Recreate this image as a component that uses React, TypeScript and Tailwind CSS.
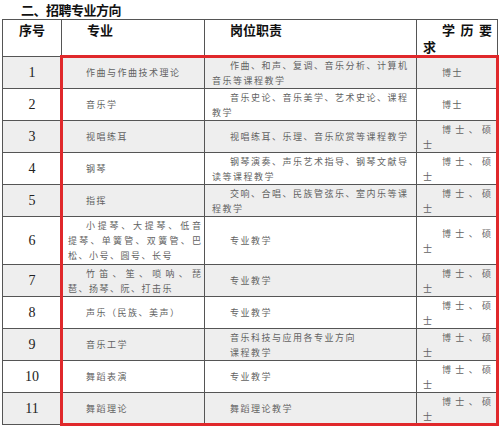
import React from "react";

type Line = { text: string; indent?: boolean; spread?: boolean };

const cjk = "font-['Noto_Sans_CJK_SC','Noto_Sans',sans-serif]";
const body = `${cjk} text-[9px] tracking-[1.5px] text-[#626262] leading-[15px]`;

function Spread({ text, className }: { text: string; className?: string }) {
  return (
    <div className={`flex justify-between ${className ?? ""}`}>
      {Array.from(text).map((c, i) => (
        <span key={i}>{c}</span>
      ))}
    </div>
  );
}

function Lines({ lines, indent }: { lines: Line[]; indent: string }) {
  return (
    <div className="flex flex-col w-full">
      {lines.map((l, i) =>
        l.spread ? (
          <Spread
            key={i}
            text={l.text}
            className={`${l.indent ? indent : ""} tracking-normal`}
          />
        ) : (
          <div key={i} className={`whitespace-nowrap ${l.indent ? indent : ""}`}>
            {l.text}
          </div>
        )
      )}
    </div>
  );
}

type Row = {
  n: number;
  major: Line[];
  duty: Line[];
  master: boolean;
  h: string;
};

const rows: Row[] = [
  {
    n: 1,
    major: [{ text: "作曲与作曲技术理论", indent: true }],
    duty: [
      { text: "作曲、和声、复调、音乐分析、计算机", indent: true },
      { text: "音乐等课程教学" },
    ],
    master: false,
    h: "h-[32px]",
  },
  {
    n: 2,
    major: [{ text: "音乐学", indent: true }],
    duty: [
      { text: "音乐史论、音乐美学、艺术史论、课程", indent: true },
      { text: "教学" },
    ],
    master: false,
    h: "h-[32px]",
  },
  {
    n: 3,
    major: [{ text: "视唱练耳", indent: true }],
    duty: [{ text: "视唱练耳、乐理、音乐欣赏等课程教学", indent: true }],
    master: true,
    h: "h-[32px]",
  },
  {
    n: 4,
    major: [{ text: "钢琴", indent: true }],
    duty: [
      { text: "钢琴演奏、声乐艺术指导、钢琴文献导", indent: true },
      { text: "读等课程教学" },
    ],
    master: true,
    h: "h-[32px]",
  },
  {
    n: 5,
    major: [{ text: "指挥", indent: true }],
    duty: [
      { text: "交响、合唱、民族管弦乐、室内乐等课", indent: true },
      { text: "程教学" },
    ],
    master: true,
    h: "h-[32px]",
  },
  {
    n: 6,
    major: [
      { text: "小提琴、大提琴、低音", indent: true, spread: true },
      { text: "提琴、单簧管、双簧管、巴", spread: true },
      { text: "松、小号、圆号、长号" },
    ],
    duty: [{ text: "专业教学", indent: true }],
    master: true,
    h: "h-[48px]",
  },
  {
    n: 7,
    major: [
      { text: "竹笛、笙、唢呐、琵", indent: true, spread: true },
      { text: "琶、扬琴、阮、打击乐" },
    ],
    duty: [{ text: "专业教学", indent: true }],
    master: true,
    h: "h-[32px]",
  },
  {
    n: 8,
    major: [{ text: "声乐（民族、美声）", indent: true }],
    duty: [{ text: "专业教学", indent: true }],
    master: true,
    h: "h-[32px]",
  },
  {
    n: 9,
    major: [{ text: "音乐工学", indent: true }],
    duty: [
      { text: "音乐科技与应用各专业方向", indent: true },
      { text: "课程教学", indent: true },
    ],
    master: true,
    h: "h-[32px]",
  },
  {
    n: 10,
    major: [{ text: "舞蹈表演", indent: true }],
    duty: [{ text: "专业教学", indent: true }],
    master: true,
    h: "h-[32px]",
  },
  {
    n: 11,
    major: [{ text: "舞蹈理论", indent: true }],
    duty: [{ text: "舞蹈理论教学", indent: true }],
    master: true,
    h: "h-[32px]",
  },
];

const cols = "grid grid-cols-[59px_143px_212px_81px]";
const cell = "border-r border-b border-[#555]";

export default function App() {
  return (
    <div className="relative w-[500px] h-[427px] bg-white overflow-hidden">
      <div
        className={`${cjk} h-[19px] leading-[19px] pl-[21px] text-[13px] font-bold tracking-[-0.5px] text-[#111]`}
      >
        二、招聘专业方向
      </div>
      <div className="ml-[2px] w-[496px] border-l border-t border-[#555]">
        {/* header */}
        <div className={`${cols} h-[37px] bg-white`}>
          <div
            className={`${cell} ${cjk} text-[13px] font-bold leading-[17px] text-[#111] text-center pt-[1px]`}
          >
            序号
          </div>
          <div
            className={`${cell} ${cjk} text-[13px] font-bold leading-[17px] text-[#111] pl-[25px] pt-[1px]`}
          >
            专业
          </div>
          <div
            className={`${cell} ${cjk} text-[13px] font-bold leading-[17px] text-[#111] pl-[25px] pt-[1px]`}
          >
            岗位职责
          </div>
          <div
            className={`${cell} ${cjk} text-[13px] font-bold leading-[17px] text-[#111] pl-[6px] pr-[5px] pt-[1px]`}
          >
            <Spread text="学历要" className="pl-[19px]" />
            <div>求</div>
          </div>
        </div>
        {rows.map((r) => (
          <div
            key={r.n}
            className={`${cols} ${r.h} ${r.n % 2 === 1 ? "bg-[#eeeeee]" : "bg-white"}`}
          >
            <div
              className={`${cell} flex items-center justify-center font-['Liberation_Serif',serif] text-[14px] text-[#222]`}
            >
              {r.n}
            </div>
            <div className={`${cell} ${body} flex items-center pl-[6px] pr-[3px]`}>
              <Lines lines={r.major} indent="pl-[18px]" />
            </div>
            <div className={`${cell} ${body} flex items-center pl-[7px] pr-[2px]`}>
              <Lines lines={r.duty} indent="pl-[18px]" />
            </div>
            <div className={`${cell} ${body} flex items-center pl-[6px] pr-[6px]`}>
              {r.master ? (
                <div className="flex flex-col w-full">
                  <Spread text="博士、硕" className="pl-[19px] tracking-normal" />
                  <div>士</div>
                </div>
              ) : (
                <div className="pl-[19px]">博士</div>
              )}
            </div>
          </div>
        ))}
      </div>
      <div className="absolute left-[60px] top-[55px] w-[439px] h-[371px] border-[3px] border-[#e0282b] pointer-events-none" />
    </div>
  );
}
